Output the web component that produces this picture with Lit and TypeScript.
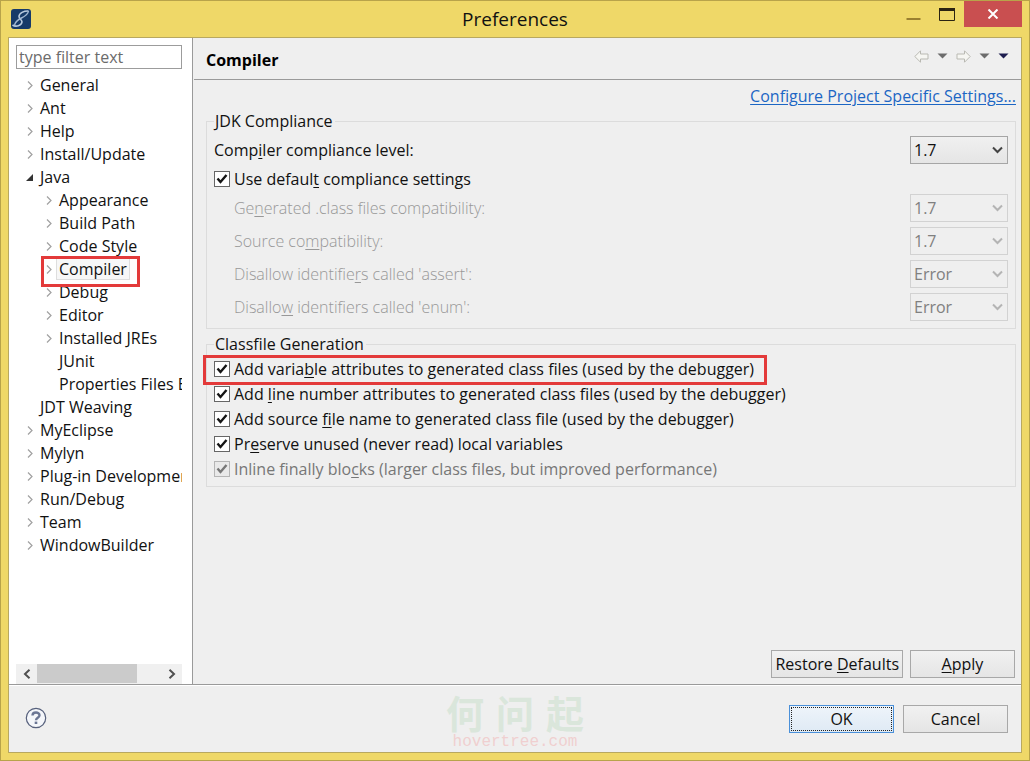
import { LitElement, html, css, svg, nothing } from "lit";
import { customElement, property, state } from "lit/decorators.js";
import { classMap } from "lit/directives/class-map.js";

interface TreeNode {
  label: string;
  depth: number;
  kind: "closed" | "open" | "leaf";
  selected?: boolean;
}

const TREE: TreeNode[] = [
  { label: "General", depth: 0, kind: "closed" },
  { label: "Ant", depth: 0, kind: "closed" },
  { label: "Help", depth: 0, kind: "closed" },
  { label: "Install/Update", depth: 0, kind: "closed" },
  { label: "Java", depth: 0, kind: "open" },
  { label: "Appearance", depth: 1, kind: "closed" },
  { label: "Build Path", depth: 1, kind: "closed" },
  { label: "Code Style", depth: 1, kind: "closed" },
  { label: "Compiler", depth: 1, kind: "closed", selected: true },
  { label: "Debug", depth: 1, kind: "closed" },
  { label: "Editor", depth: 1, kind: "closed" },
  { label: "Installed JREs", depth: 1, kind: "closed" },
  { label: "JUnit", depth: 1, kind: "leaf" },
  { label: "Properties Files Editor", depth: 1, kind: "leaf" },
  { label: "JDT Weaving", depth: 0, kind: "leaf" },
  { label: "MyEclipse", depth: 0, kind: "closed" },
  { label: "Mylyn", depth: 0, kind: "closed" },
  { label: "Plug-in Development", depth: 0, kind: "closed" },
  { label: "Run/Debug", depth: 0, kind: "closed" },
  { label: "Team", depth: 0, kind: "closed" },
  { label: "WindowBuilder", depth: 0, kind: "closed" },
];

/** Renders a label whose mnemonic letter is marked with a preceding "&". */
function mnemonic(text: string) {
  const i = text.indexOf("&");
  if (i < 0) return html`${text}`;
  return html`${text.slice(0, i)}<u>${text[i + 1]}</u>${text.slice(i + 2)}`;
}

const chevronDown = svg`<path d="M1 1.5 L5.5 6 L10 1.5" fill="none" stroke="currentColor" stroke-width="2"/>`;

@customElement("pref-tree")
export class PrefTree extends LitElement {
  static styles = css`
    :host { display: block; overflow: hidden; }
    .list { list-style: none; margin: 0; padding: 0; }
    .row { display: flex; align-items: center; height: 23px; padding-left: 9px; white-space: nowrap; }
    .nested { padding-left: 28px; }
    .glyph { flex: none; width: 10px; height: 12px; margin-right: 2px; }
    .label { padding: 0 2px; line-height: 20px; border: 1px solid transparent; color: #111; text-decoration: none; }
    .selected { background: #f7f7f7; border-color: #dedede; }
    .marked { position: relative; }
    .marked::after {
      content: ""; position: absolute; left: 25px; top: -1px; width: 93px; height: 25px;
      border: 3px solid #e33a3a; pointer-events: none; z-index: 1;
    }
  `;

  private glyph(kind: TreeNode["kind"]) {
    return html`<svg class="glyph" viewBox="0 0 10 12" aria-hidden="true">
      ${kind === "closed"
        ? svg`<path d="M3 2.5 L7 6.5 L3 10.5" fill="none" stroke="#a0a0a0" stroke-width="1.2"/>`
        : kind === "open"
          ? svg`<path d="M8 3 V10 H1 Z" fill="#333"/>`
          : nothing}
    </svg>`;
  }

  render() {
    return html`<ul class="list" role="tree">
      ${TREE.map(
        (n) => html`<li role="treeitem" class=${classMap({ row: true, nested: n.depth === 1, marked: !!n.selected })}>
          ${this.glyph(n.kind)}<a href="#" class=${classMap({ label: true, selected: !!n.selected })}>${n.label}</a>
        </li>`
      )}
    </ul>`;
  }
}

@customElement("pref-check")
export class PrefCheck extends LitElement {
  @property() label = "";
  @property({ type: Boolean }) disabled = false;
  @property({ type: Boolean }) marked = false;
  @state() private checked = true;

  static styles = css`
    :host { display: flex; }
    .field { display: flex; align-items: center; gap: 4px; line-height: 20px; position: relative; white-space: nowrap; }
    .box {
      appearance: none; margin: 0; width: 16px; height: 16px; flex: none;
      border: 1px solid #666; background: #fff;
    }
    .holder { display: grid; }
    .holder > * { grid-area: 1 / 1; }
    .tick { width: 16px; height: 16px; pointer-events: none; color: #151515; }
    .off { color: #777; }
    .off .tick { color: #777; }
    .off .box { border-color: #b5b5b5; background: #e9e9e9; }
    .marked::after {
      content: ""; position: absolute; inset: -4px -13px -6px -11px;
      border: 3px solid #e33a3a; pointer-events: none;
    }
    u { text-underline-offset: 2px; }
  `;

  render() {
    return html`<label class=${classMap({ field: true, off: this.disabled, marked: this.marked })}>
      <span class="holder">
        <input class="box" type="checkbox" .checked=${this.checked} ?disabled=${this.disabled}
          @change=${(e: Event) => (this.checked = (e.target as HTMLInputElement).checked)} />
        ${this.checked
          ? html`<svg class="tick" viewBox="0 0 16 16" aria-hidden="true">
              <path d="M3.5 7.5 L6.5 11 L12.5 4" fill="none" stroke="currentColor" stroke-width="2.4" />
            </svg>`
          : nothing}
      </span>
      <span>${mnemonic(this.label)}</span>
    </label>`;
  }
}

@customElement("pref-combo")
export class PrefCombo extends LitElement {
  @property() label = "";
  @property() value = "";
  @property({ type: Boolean }) disabled = false;

  static styles = css`
    :host { display: flex; align-items: center; justify-content: space-between; }
    .text { color: #111; line-height: 20px; }
    .off { color: #989898; padding-left: 20px; font-weight: 300; }
    .holder { display: grid; align-items: center; width: 98px; }
    .holder > * { grid-area: 1 / 1; }
    .select {
      appearance: none; box-sizing: border-box; width: 100%; height: 28px; margin: 0; padding: 0 3px;
      font: inherit; color: #111; border: 1px solid #a6a6a6; border-radius: 0;
      background: linear-gradient(#f0f0f0, #e5e5e5);
    }
    .select:disabled { color: #808080; border-color: #d2d2d2; background: #efefef; opacity: 1; }
    .arrow { justify-self: end; width: 11px; height: 8px; margin-right: 5px; color: #444; pointer-events: none; }
    .dim { color: #b4b4b4; }
    u { text-underline-offset: 2px; }
  `;

  render() {
    return html`
      <label for="combo" class=${classMap({ text: true, off: this.disabled })}>${mnemonic(this.label)}</label>
      <span class="holder">
        <select id="combo" class="select" ?disabled=${this.disabled}><option>${this.value}</option></select>
        <svg class=${classMap({ arrow: true, dim: this.disabled })} viewBox="0 0 11 8" aria-hidden="true">${chevronDown}</svg>
      </span>
    `;
  }
}

@customElement("app-root")
export class AppRoot extends LitElement {
  static styles = css`
    :host { display: block; font: 16px/20px "Open Sans", "Noto Sans", "Noto Sans CJK SC", sans-serif; color: #111; }
    .window {
      box-sizing: border-box; min-height: 100vh; display: flex; flex-direction: column;
      padding: 0 7px 7px; border: 1px solid #b8a34a; background: #efd868;
    }
    .titlebar { display: grid; grid-template-columns: 1fr auto 1fr; height: 36px; }
    .logo { width: 20px; height: 20px; margin: 8px 0 0 3px; }
    .title { margin: 0; font-size: 19px; font-weight: 400; line-height: 36px; }
    .controls { display: flex; justify-content: flex-end; align-items: flex-start; }
    .control { border: 0; padding: 0; background: none; width: 34px; height: 26px; }
    .close { width: 58px; background: #c94f50; }
    .icon { display: block; margin: auto; }
    .client { flex: 1; display: flex; flex-direction: column; border: 1px solid #b8a860; background: #efefef; }
    .body { flex: 1; display: flex; border-bottom: 1px solid #9a9a9a; }
    .sidebar {
      box-sizing: border-box; flex: none; width: 184px; display: flex; flex-direction: column;
      padding: 7px 10px 0 7px; background: #fff; border-right: 1px solid #9a9a9a;
    }
    .filter {
      box-sizing: border-box; width: 100%; height: 24px; padding: 0 2px; margin: 0 0 4px;
      border: 1px solid #9c9c9c; font: inherit; background: #fff; border-radius: 0;
    }
    .filter::placeholder { color: #6b6b6b; opacity: 1; }
    .tree { flex: 1; }
    .scroll { display: grid; grid-template-columns: 21px 1fr 21px; height: 20px; background: #f0f0f0; }
    .scrollbtn { border: 0; padding: 0; background: none; }
    .thumb { width: 81%; height: 19px; background: #cbcbcb; }
    .main { flex: 1; min-width: 0; display: flex; flex-direction: column; margin-left: 1px; }
    .head {
      display: flex; align-items: center; justify-content: space-between; box-sizing: border-box;
      height: 42px; padding: 0 12px; border-bottom: 1px solid #9a9a9a;
    }
    .heading { margin: 0; padding-top: 3px; font-size: 16px; font-weight: 700; line-height: 20px; color: #000; }
    .nav { display: flex; align-items: center; gap: 8px; padding-bottom: 5px; }
    .navbtn { border: 0; padding: 0; background: none; display: block; }
    .content { flex: 1; display: flex; flex-direction: column; padding: 6px 5px 6px 12px; gap: 5px; }
    .link { align-self: flex-end; color: #1c66c4; text-underline-offset: 2px; }
    .group {
      margin: 0; min-width: 0; padding: 5px 7px 7px; border: 1px solid #dcdcdc;
      display: flex; flex-direction: column; gap: 5px;
    }
    .legend { padding: 0 2px 0 1px; }
    .actions { display: flex; justify-content: flex-end; gap: 7px; margin-top: auto; padding-right: 1px; }
    .button {
      box-sizing: border-box; min-width: 105px; height: 28px; padding: 0 3px; font: inherit; color: #111;
      border: 1px solid #a8a8a8; background: linear-gradient(#f1f1f1, #e5e5e5);
    }
    .default { border-color: #4a90d9; background: linear-gradient(#eef4fa, #dfeaf5); outline: 1px dotted #222; outline-offset: -3px; }
    .footer { display: grid; grid-template-columns: 1fr auto 1fr; height: 66px; border-top: 1px solid #fff; }
    .help { border: 0; padding: 0; background: none; margin: 21px 0 0 16px; width: 22px; height: 22px; }
    .brand { display: flex; flex-direction: column; align-items: center; }
    .brandname { display: flex; gap: 12px; font: 700 38px/44px "Noto Sans CJK SC", sans-serif; color: #dae6db; padding-top: 4px; }
    .brandsite { font: 400 16px/16px "Liberation Mono", monospace; color: #f0cfd0; }
    .confirm { display: flex; justify-content: flex-end; gap: 9px; padding: 19px 13px 0 0; }
    u { text-underline-offset: 2px; }
  `;

  private caret(color: string) {
    return html`<button class="navbtn" aria-label="History">
      <svg class="icon" width="11" height="6" viewBox="0 0 11 6"><path d="M0.5 0.5 H10.5 L5.5 5.5 Z" fill=${color} /></svg>
    </button>`;
  }

  render() {
    return html`
      <div class="window">
        <header class="titlebar">
          <svg class="logo" viewBox="0 0 20 20" aria-hidden="true">
            <rect width="20" height="20" rx="3" fill="#173a68" />
            <path d="M1.5 16 C5 18.500 10.500 16.500 11 13 C11.300 11 8 10 8 7.500 C8 4 13 1.800 17.500 2" fill="none" stroke="#b9cade" stroke-width="1.600" />
            <path d="M17.500 2 C17 5.500 13.500 7.500 10.500 9 C7 10.800 4 12.500 3.500 16.500" fill="none" stroke="#a3b8d2" stroke-width="1.400" />
          </svg>
          <h1 class="title">Preferences</h1>
          <div class="controls">
            <button class="control" aria-label="Minimize">
              <svg class="icon" width="15" height="20" viewBox="0 0 15 20"><path d="M0.500 15 H14.500" stroke="#9a8030" stroke-width="2" /></svg>
            </button>
            <button class="control" aria-label="Maximize">
              <svg class="icon" width="16" height="13" viewBox="0 0 16 13"><path d="M0.500 1 H15.500 V12.500 H0.500 Z" fill="none" stroke="#2b2412" /><path d="M0 1.500 H16" stroke="#2b2412" stroke-width="3" /></svg>
            </button>
            <button class="control close" aria-label="Close">
              <svg class="icon" width="12" height="10" viewBox="0 0 12 10"><path d="M1.500 0.500 L10.500 9.500 M10.500 0.500 L1.500 9.500" stroke="#fff" stroke-width="2" /></svg>
            </button>
          </div>
        </header>

        <div class="client">
          <div class="body">
            <nav class="sidebar">
              <input class="filter" type="text" placeholder="type filter text" aria-label="Filter" />
              <pref-tree class="tree"></pref-tree>
              <div class="scroll">
                <button class="scrollbtn" aria-label="Scroll left">
                  <svg class="icon" width="8" height="10" viewBox="0 0 8 10"><path d="M6.500 0.800 L2 5 L6.500 9.200" fill="none" stroke="#505050" stroke-width="2" /></svg>
                </button>
                <div class="thumb"></div>
                <button class="scrollbtn" aria-label="Scroll right">
                  <svg class="icon" width="8" height="10" viewBox="0 0 8 10"><path d="M1.500 0.800 L6 5 L1.500 9.200" fill="none" stroke="#505050" stroke-width="2" /></svg>
                </button>
              </div>
            </nav>

            <main class="main">
              <div class="head">
                <h2 class="heading">Compiler</h2>
                <div class="nav">
                  <button class="navbtn" aria-label="Back">
                    <svg class="icon" width="15" height="13" viewBox="0 0 15 13"><path d="M0.800 6.500 L6.500 0.800 V4 H14 V9 H6.500 V12.200 Z" fill="#f6f6f2" stroke="#b9b9b2" /></svg>
                  </button>
                  ${this.caret("#6c6c6c")}
                  <button class="navbtn" aria-label="Forward">
                    <svg class="icon" width="15" height="13" viewBox="0 0 15 13"><path d="M14.200 6.500 L8.500 0.800 V4 H1 V9 H8.500 V12.200 Z" fill="#f6f6f2" stroke="#b9b9b2" /></svg>
                  </button>
                  ${this.caret("#6c6c6c")} ${this.caret("#1d1d4f")}
                </div>
              </div>

              <div class="content">
                <a class="link" href="#">Configure Project Specific Settings...</a>

                <fieldset class="group">
                  <legend class="legend">JDK Compliance</legend>
                  <pref-combo label="Comp&iler compliance level:" value="1.7"></pref-combo>
                  <pref-check label="Use defaul&t compliance settings"></pref-check>
                  <pref-combo disabled label="Ge&nerated .class files compatibility:" value="1.7"></pref-combo>
                  <pref-combo disabled label="Source co&mpatibility:" value="1.7"></pref-combo>
                  <pref-combo disabled label="Disallow identifie&rs called 'assert':" value="Error"></pref-combo>
                  <pref-combo disabled label="Disallo&w identifiers called 'enum':" value="Error"></pref-combo>
                </fieldset>

                <fieldset class="group">
                  <legend class="legend">Classfile Generation</legend>
                  <pref-check marked label="Add varia&ble attributes to generated class files (used by the debugger)"></pref-check>
                  <pref-check label="Add &line number attributes to generated class files (used by the debugger)"></pref-check>
                  <pref-check label="Add source &file name to generated class file (used by the debugger)"></pref-check>
                  <pref-check label="Pr&eserve unused (never read) local variables"></pref-check>
                  <pref-check disabled label="Inline finally blo&cks (larger class files, but improved performance)"></pref-check>
                </fieldset>

                <div class="actions">
                  <button class="button">Restore <u>D</u>efaults</button>
                  <button class="button"><u>A</u>pply</button>
                </div>
              </div>
            </main>
          </div>

          <footer class="footer">
            <button class="help" aria-label="Help">
              <svg class="icon" width="22" height="22" viewBox="0 0 22 22">
                <circle cx="11" cy="11" r="9.700" fill="#f4f6fa" stroke="#56607c" stroke-width="1.200" />
                <path d="M7.500 8.500 C7.500 4.500 14.500 4.500 14.500 8.300 C14.500 10.800 11 10.800 11 13.300" fill="none" stroke="#6b7694" stroke-width="2.400" />
                <rect x="9.700" y="14.600" width="2.600" height="2.400" fill="#6b7694" />
              </svg>
            </button>
            <div class="brand">
              <div class="brandname"><span>何</span><span>问</span><span>起</span></div>
              <div class="brandsite">hovertree.com</div>
            </div>
            <div class="confirm">
              <button class="button default">OK</button>
              <button class="button">Cancel</button>
            </div>
          </footer>
        </div>
      </div>
    `;
  }
}
